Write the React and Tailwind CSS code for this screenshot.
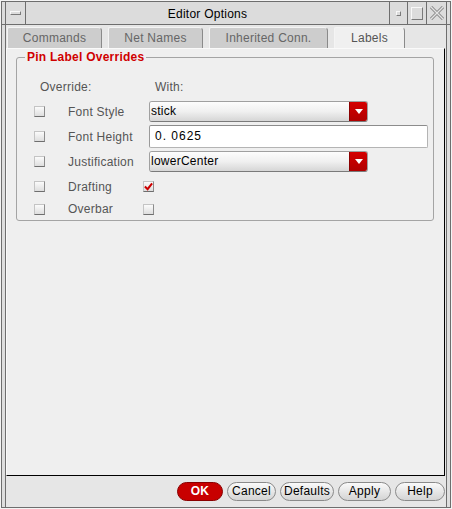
const Check = ({ checked }) => (
  <div className="w-[11px] h-[11px] border border-[#c4c4c4] border-r-[#8c8c8c] border-b-[#6e6e6e] bg-gradient-to-b from-[#fbfbfb] to-[#dedede] flex items-center justify-center">
    {checked && (
      <svg width="10" height="9" viewBox="0 0 10 9">
        <path d="M1 4.5 L4 7.5 L9 1" fill="none" stroke="#cc0000" strokeWidth="2.2" />
      </svg>
    )}
  </div>
);

const Dropdown = ({ value }) => (
  <div className="ml-[6px] w-[219px] h-[21px] flex rounded-[3px] border border-[#a0a0a0] border-b-[#7a7a7a] overflow-hidden">
    <div className="flex-1 bg-gradient-to-b from-[#fdfdfd] via-[#f0f0f0] to-[#d6d6d6] text-[12px] leading-[19px] pl-px text-black">
      {value}
    </div>
    <div className="w-[18px] bg-gradient-to-b from-[#d40000] to-[#b00000] border-l border-[#8a0000] flex items-center justify-center">
      <svg width="8" height="5" viewBox="0 0 8 5">
        <path d="M0 0 H8 L4 5 Z" fill="#ffffff" />
      </svg>
    </div>
  </div>
);

const Row = ({ label, children, h = 'h-[25px]' }) => (
  <div className={`${h} flex items-center`}>
    <div className="w-[51px] pl-[17px]">
      <Check />
    </div>
    <div className="w-[75px] text-[12px] text-[#555]">{label}</div>
    {children}
  </div>
);

const Btn = ({ children, w, red }) => (
  <button
    className={`${w} h-[19px] rounded-full border text-[12px] leading-[17px] ${
      red
        ? 'bg-[#c80000] border-[#8a0000] text-white font-bold'
        : 'bg-gradient-to-b from-[#fafafa] to-[#d4d4d4] border-[#8a8a8a] text-black'
    }`}
  >
    {children}
  </button>
);

const Tab = ({ children, w, active }) => (
  <div
    className={`${w} h-[21px] rounded-tr-[4px] rounded-tl-[2px] border-t border-l border-r border-t-[#f4f4f4] border-l-[#f4f4f4] border-r-[#8a8a8a] text-[12px] leading-[21px] text-center ${
      active ? 'bg-[#f0f0f0] text-[#555]' : 'bg-[#cdcdcd] text-[#666]'
    }`}
  >
    {children}
  </div>
);

export default function App() {
  return (
    <div className="w-[452px] h-[509px] bg-[#f4f4f4] p-px tracking-[0.25px] font-['Liberation_Sans',Arial,sans-serif]">
      <div className="w-full h-full border border-[#6e6e6e] bg-[#dedede] flex flex-col">
        {/* title bar */}
        <div className="h-[23px] flex border-b border-[#6e6e6e] bg-[#dcdcdc]">
          <div className="w-[3px]" />
          <div className="w-[21px] border-l border-r border-[#6e6e6e] flex items-center justify-center">
            <div className="w-[11px] h-[4px] border border-[#f8f8f8] border-r-[#7a7a7a] border-b-[#7a7a7a]" />
          </div>
          <div className="flex-1 text-center text-[12px] leading-[24px] text-black">Editor Options</div>
          <div className="w-[18px] border-l border-[#6e6e6e] flex items-center justify-center">
            <div className="w-[5px] h-[5px] border border-[#f8f8f8] border-r-[#7a7a7a] border-b-[#7a7a7a]" />
          </div>
          <div className="w-[19px] border-l border-[#6e6e6e] flex items-center justify-center">
            <div className="w-[12px] h-[13px] border border-[#f8f8f8] border-r-[#7a7a7a] border-b-[#7a7a7a]" />
          </div>
          <div className="w-[21px] border-l border-r border-[#6e6e6e] flex items-center justify-center">
            <svg width="14" height="14" viewBox="0 0 14 14">
              <path d="M1 1 L13 13 M13 1 L1 13" stroke="#8c8c8c" strokeWidth="3.2" />
              <path d="M1 1 L13 13 M13 1 L1 13" stroke="#e4e4e4" strokeWidth="1.3" />
            </svg>
          </div>
          <div className="w-[3px]" />
        </div>

        {/* body */}
        <div className="flex-1 flex">
          <div className="w-[3px]" />
          <div className="flex-1 border-l border-r border-[#6e6e6e] bg-[#e6e6e6] flex flex-col">
            {/* tabs */}
            <div className="h-[23px] flex items-end gap-[6px] pl-px">
              <Tab w="w-[95px]">Commands</Tab>
              <Tab w="w-[95px]">Net Names</Tab>
              <Tab w="w-[119px]">Inherited Conn.</Tab>
              <Tab w="w-[71px]" active>Labels</Tab>
            </div>

            {/* panel */}
            <div className="h-[428px] mr-px bg-[#efefef] border-t border-l border-t-[#fafafa] border-l-[#fafafa] border-r border-b border-r-black border-b-black pt-[8px] pl-[9px] pr-[10px]">
              <div className="relative w-[418px] h-[164px] border border-[#a4a4a4] rounded-[3px] pt-[17px]">
                <div className="absolute -top-[8px] left-[8px] px-[2px] bg-[#efefef] text-[12px] leading-[14px] font-bold text-[#d00000]">
                  Pin Label Overrides
                </div>
                <div className="h-[24px] flex items-center text-[12px] text-[#555]">
                  <div className="w-[138px] pl-[23px]">Override:</div>
                  <div>With:</div>
                </div>
                <Row label="Font Style">
                  <Dropdown value="stick" />
                </Row>
                <Row label="Font Height">
                  <div className="ml-[6px] w-[279px] h-[23px] bg-white border border-[#b4b4b4] border-t-[#8c8c8c] border-l-[#9a9a9a] rounded-[2px] text-[12px] leading-[21px] pl-[5px] text-black tracking-[1px]">
                    0. 0625
                  </div>
                </Row>
                <Row label="Justification">
                  <Dropdown value="lowerCenter" />
                </Row>
                <Row label="Drafting">
                  <Check checked />
                </Row>
                <Row label="Overbar" h="h-[20px]">
                  <Check />
                </Row>
              </div>
            </div>

            {/* buttons */}
            <div className="flex-1 flex justify-end items-start pt-[6px] pr-[1px] gap-[4px]">
              <Btn w="w-[46px]" red>OK</Btn>
              <Btn w="w-[49px]">Cancel</Btn>
              <Btn w="w-[54px]">Defaults</Btn>
              <Btn w="w-[53px]">Apply</Btn>
              <Btn w="w-[50px]">Help</Btn>
            </div>
          </div>
          <div className="w-[3px]" />
        </div>
      </div>
    </div>
  );
}
